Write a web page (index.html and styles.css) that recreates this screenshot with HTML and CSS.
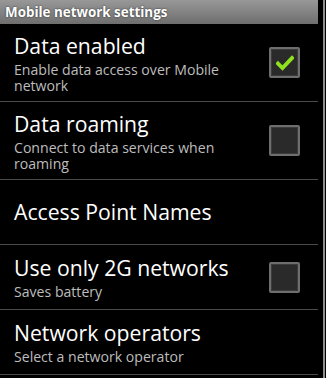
FILE: index.html
```html
<!DOCTYPE html>
<html>
<head>
<meta charset="utf-8">
<link rel="stylesheet" href="styles.css">
</head>
<body>
<div class="screen">
  <div class="list">
    <div class="header">Mobile network settings</div>
    <div class="item tall">
      <div class="texts">
        <div class="title">Data enabled</div>
        <div class="summary">Enable data access over Mobile network</div>
      </div>
      <div class="check on">
        <svg width="18" height="16" viewBox="0 0 18 16"><path d="M2 8.5 L6.5 13 L16 3" fill="none" stroke="#8fe31c" stroke-width="3.8" stroke-linecap="square"/></svg>
      </div>
    </div>
    <div class="item tall">
      <div class="texts">
        <div class="title">Data roaming</div>
        <div class="summary">Connect to data services when roaming</div>
      </div>
      <div class="check"></div>
    </div>
    <div class="item">
      <div class="texts">
        <div class="title">Access Point Names</div>
      </div>
    </div>
    <div class="item">
      <div class="texts">
        <div class="title">Use only 2G networks</div>
        <div class="summary">Saves battery</div>
      </div>
      <div class="check"></div>
    </div>
    <div class="item">
      <div class="texts">
        <div class="title">Network operators</div>
        <div class="summary">Select a network operator</div>
      </div>
    </div>
  </div>
  <div class="scrollbar"></div>
</div>
</body>
</html>
```
FILE: styles.css
```css
html, body {
  margin: 0;
  padding: 0;
  background: #000;
}
body {
  font-family: "Open Sans", "DejaVu Sans", sans-serif;
  color: #fff;
  width: 326px;
  height: 378px;
  overflow: hidden;
}
.screen {
  display: flex;
  height: 378px;
}
.list {
  width: 318px;
  display: flex;
  flex-direction: column;
}
.scrollbar {
  width: 2px;
  margin-left: 5px;
  background: #8e8e8e;
  height: 378px;
}
.header {
  height: 24px;
  background: linear-gradient(#989898, #6e6e6e);
  font-weight: bold;
  font-size: 13.4px;
  line-height: 24px;
  padding-left: 5px;
  color: #fff;
  text-shadow: 0 0 2px rgba(0,0,0,0.7);
}
.item {
  display: flex;
  align-items: center;
  height: 64px;
  border-bottom: 1px solid #4a4a4a;
  padding-left: 14px;
  padding-right: 18px;
}
.item.tall {
  height: 77px;
}
.texts {
  flex: 1;
  padding-right: 20px;
}
.title {
  font-size: 21.2px;
  line-height: 28px;
}
.summary {
  font-size: 14.1px;
  line-height: 16px;
  margin-top: 2px;
  color: #bdbdbd;
}
.check {
  width: 27px;
  height: 27px;
  border: 2px solid #6e6e6e;
  border-radius: 2px;
  background: #2a2a2a;
  box-shadow: inset 0 0 0 1px #3c3c3c;
  display: flex;
  align-items: center;
  justify-content: center;
}
```
